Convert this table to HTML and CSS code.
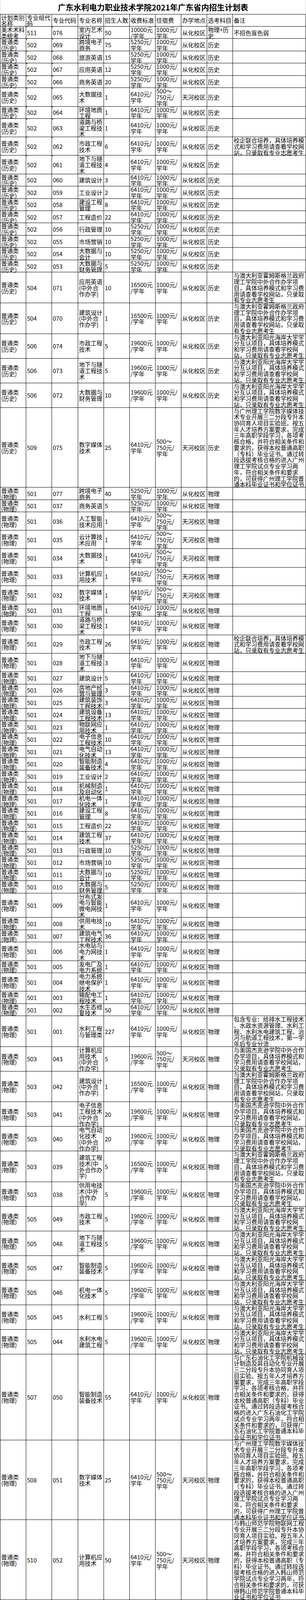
FILE: index.html
```html
<!DOCTYPE html>
<html lang="zh-CN">
<head>
<meta charset="utf-8">
<title>广东水利电力职业技术学院2021年广东省内招生计划表</title>
<link rel="stylesheet" href="styles.css">
</head>
<body>
<div class="title">广东水利电力职业技术学院2021年广东省内招生计划表</div>
<table class="plan">
<colgroup>
<col class="c66"><col class="c66"><col class="c67"><col class="c66"><col class="c66"><col class="c66"><col class="c66"><col class="c66"><col class="c66"><col class="c187">
</colgroup>
<tbody>
<tr><td><span class="l">计划类别</span><span class="l">名称</span></td><td><span class="l">专业组代</span><span class="l">码</span></td><td>专业代码</td><td>专业名称</td><td>招生人数</td><td>收费标准</td><td>住宿费</td><td>办学地点</td><td>选考科目</td><td>备注</td></tr>
<tr><td><span class="l">美术术科</span><span class="l">类统考</span></td><td class="m">511</td><td class="m">076</td><td><span class="l">室内艺术</span><span class="l">设计</span></td><td>50</td><td><span class="l">10000元</span><span class="l">/学年</span></td><td><span class="l">1000元/</span><span class="l">学年</span></td><td>从化校区</td><td><span class="l">物理+历</span><span class="l">史</span></td><td>不招色盲色弱</td></tr>
<tr><td><span class="l">普通类</span><span class="l">(历史)</span></td><td class="m">502</td><td class="m">069</td><td><span class="l">跨境电子</span><span class="l">商务</span></td><td>75</td><td><span class="l">5250元/</span><span class="l">学年</span></td><td><span class="l">1000元/</span><span class="l">学年</span></td><td>从化校区</td><td>历史</td><td></td></tr>
<tr><td><span class="l">普通类</span><span class="l">(历史)</span></td><td class="m">502</td><td class="m">068</td><td>旅游英语</td><td>15</td><td><span class="l">5250元/</span><span class="l">学年</span></td><td><span class="l">1000元/</span><span class="l">学年</span></td><td>从化校区</td><td>历史</td><td></td></tr>
<tr><td><span class="l">普通类</span><span class="l">(历史)</span></td><td class="m">502</td><td class="m">067</td><td>应用英语</td><td>12</td><td><span class="l">5250元/</span><span class="l">学年</span></td><td><span class="l">1000元/</span><span class="l">学年</span></td><td>从化校区</td><td>历史</td><td></td></tr>
<tr><td><span class="l">普通类</span><span class="l">(历史)</span></td><td class="m">502</td><td class="m">066</td><td>商务英语</td><td>20</td><td><span class="l">5250元/</span><span class="l">学年</span></td><td><span class="l">1000元/</span><span class="l">学年</span></td><td>从化校区</td><td>历史</td><td></td></tr>
<tr><td><span class="l">普通类</span><span class="l">(历史)</span></td><td class="m">502</td><td class="m">065</td><td><span class="l">大数据技</span><span class="l">术</span></td><td>1</td><td><span class="l">6410元/</span><span class="l">学年</span></td><td><span class="l">500～</span><span class="l">750元/</span><span class="l">学年</span></td><td>天河校区</td><td>历史</td><td></td></tr>
<tr><td><span class="l">普通类</span><span class="l">(历史)</span></td><td class="m">502</td><td class="m">064</td><td><span class="l">环境地质</span><span class="l">工程</span></td><td>1</td><td><span class="l">6410元/</span><span class="l">学年</span></td><td><span class="l">1000元/</span><span class="l">学年</span></td><td>从化校区</td><td>历史</td><td></td></tr>
<tr><td><span class="l">普通类</span><span class="l">(历史)</span></td><td class="m">502</td><td class="m">063</td><td><span class="l">道路与桥</span><span class="l">梁工程技</span><span class="l">术</span></td><td>1</td><td><span class="l">6410元/</span><span class="l">学年</span></td><td><span class="l">1000元/</span><span class="l">学年</span></td><td>从化校区</td><td>历史</td><td></td></tr>
<tr><td><span class="l">普通类</span><span class="l">(历史)</span></td><td class="m">502</td><td class="m">062</td><td><span class="l">市政工程</span><span class="l">技术</span></td><td>6</td><td><span class="l">6410元/</span><span class="l">学年</span></td><td><span class="l">1000元/</span><span class="l">学年</span></td><td>从化校区</td><td>历史</td><td><span class="l">校企联合培养，具体培养模</span><span class="l">式和学习费用请查看学校网</span><span class="l">站，只录取有专业志愿考生</span></td></tr>
<tr><td><span class="l">普通类</span><span class="l">(历史)</span></td><td class="m">502</td><td class="m">061</td><td><span class="l">地下与隧</span><span class="l">道工程技</span><span class="l">术</span></td><td>4</td><td><span class="l">6410元/</span><span class="l">学年</span></td><td><span class="l">1000元/</span><span class="l">学年</span></td><td>从化校区</td><td>历史</td><td></td></tr>
<tr><td><span class="l">普通类</span><span class="l">(历史)</span></td><td>502</td><td>060</td><td>建筑设计</td><td>3</td><td><span class="l">6410元/</span><span class="l">学年</span></td><td><span class="l">1000元/</span><span class="l">学年</span></td><td>从化校区</td><td>历史</td><td></td></tr>
<tr><td><span class="l">普通类</span><span class="l">(历史)</span></td><td>502</td><td>059</td><td>工业设计</td><td>2</td><td><span class="l">6410元/</span><span class="l">学年</span></td><td><span class="l">1000元/</span><span class="l">学年</span></td><td>从化校区</td><td>历史</td><td></td></tr>
<tr><td><span class="l">普通类</span><span class="l">(历史)</span></td><td>502</td><td>058</td><td><span class="l">建设工程</span><span class="l">管理</span></td><td>8</td><td><span class="l">6410元/</span><span class="l">学年</span></td><td><span class="l">1000元/</span><span class="l">学年</span></td><td>从化校区</td><td>历史</td><td></td></tr>
<tr><td><span class="l">普通类</span><span class="l">(历史)</span></td><td>502</td><td>057</td><td>工程造价</td><td>22</td><td><span class="l">6410元/</span><span class="l">学年</span></td><td><span class="l">1000元/</span><span class="l">学年</span></td><td>从化校区</td><td>历史</td><td></td></tr>
<tr><td><span class="l">普通类</span><span class="l">(历史)</span></td><td>502</td><td>056</td><td>行政管理</td><td>10</td><td><span class="l">5250元/</span><span class="l">学年</span></td><td><span class="l">1000元/</span><span class="l">学年</span></td><td>从化校区</td><td>历史</td><td></td></tr>
<tr><td><span class="l">普通类</span><span class="l">(历史)</span></td><td>502</td><td>055</td><td>市场营销</td><td>10</td><td><span class="l">5250元/</span><span class="l">学年</span></td><td><span class="l">1000元/</span><span class="l">学年</span></td><td>从化校区</td><td>历史</td><td></td></tr>
<tr><td><span class="l">普通类</span><span class="l">(历史)</span></td><td>502</td><td>054</td><td><span class="l">大数据与</span><span class="l">会计</span></td><td>10</td><td><span class="l">5250元/</span><span class="l">学年</span></td><td><span class="l">1000元/</span><span class="l">学年</span></td><td>从化校区</td><td>历史</td><td></td></tr>
<tr><td><span class="l">普通类</span><span class="l">(历史)</span></td><td>502</td><td>053</td><td><span class="l">大数据与</span><span class="l">财务管理</span></td><td>5</td><td><span class="l">5250元/</span><span class="l">学年</span></td><td><span class="l">1000元/</span><span class="l">学年</span></td><td>从化校区</td><td>历史</td><td></td></tr>
<tr><td><span class="l">普通类</span><span class="l">(历史)</span></td><td>504</td><td>071</td><td><span class="l">应用英语</span><span class="l">(中外合</span><span class="l">作办学)</span></td><td>10</td><td><span class="l">16500元</span><span class="l">/学年</span></td><td><span class="l">1000元/</span><span class="l">学年</span></td><td>从化校区</td><td>历史</td><td><span class="l">与澳大利亚霍姆斯格兰政府</span><span class="l">理工学院中外合作办学项</span><span class="l">目，具体培养模式和学习费</span><span class="l">用请查看学校网站，只录取</span><span class="l">有专业志愿考生</span></td></tr>
<tr><td><span class="l">普通类</span><span class="l">(历史)</span></td><td>504</td><td>070</td><td><span class="l">建筑设计</span><span class="l">(中外合</span><span class="l">作办学)</span></td><td>1</td><td><span class="l">16500元</span><span class="l">/学年</span></td><td><span class="l">1000元/</span><span class="l">学年</span></td><td>从化校区</td><td>历史</td><td><span class="l">与澳大利亚霍姆斯格兰政府</span><span class="l">理工学院中外合作办学项</span><span class="l">目，具体培养模式和学习费</span><span class="l">用请查看学校网站，只录取</span><span class="l">有专业志愿考生</span></td></tr>
<tr><td><span class="l">普通类</span><span class="l">(历史)</span></td><td>506</td><td>074</td><td><span class="l">市政工程</span><span class="l">技术</span></td><td>5</td><td><span class="l">19600元</span><span class="l">/学年</span></td><td><span class="l">1000元/</span><span class="l">学年</span></td><td>从化校区</td><td>历史</td><td><span class="l">与澳大利亚阳光海岸大学学</span><span class="l">分互认项目，具体培养模式</span><span class="l">和学习费用请查看学校网</span><span class="l">站，只录取有专业志愿考生</span></td></tr>
<tr><td><span class="l">普通类</span><span class="l">(历史)</span></td><td>506</td><td>073</td><td><span class="l">地下与隧</span><span class="l">道工程技</span><span class="l">术</span></td><td>5</td><td><span class="l">19600元</span><span class="l">/学年</span></td><td><span class="l">1000元/</span><span class="l">学年</span></td><td>从化校区</td><td>历史</td><td><span class="l">与澳大利亚阳光海岸大学学</span><span class="l">分互认项目，具体培养模式</span><span class="l">和学习费用请查看学校网</span><span class="l">站，只录取有专业志愿考生</span></td></tr>
<tr><td><span class="l">普通类</span><span class="l">(历史)</span></td><td>506</td><td>072</td><td><span class="l">大数据与</span><span class="l">财务管理</span></td><td>10</td><td><span class="l">19600元</span><span class="l">/学年</span></td><td><span class="l">1000元/</span><span class="l">学年</span></td><td>从化校区</td><td>历史</td><td><span class="l">与澳大利亚阳光海岸大学学</span><span class="l">分互认项目，具体培养模式</span><span class="l">和学习费用请查看学校网</span><span class="l">站，只录取有专业志愿考生</span></td></tr>
<tr><td><span class="l">普通类</span><span class="l">(历史)</span></td><td>509</td><td>075</td><td><span class="l">数字媒体</span><span class="l">技术</span></td><td>25</td><td><span class="l">6410元/</span><span class="l">学年</span></td><td><span class="l">500～</span><span class="l">750元/</span><span class="l">学年</span></td><td>天河校区</td><td>历史</td><td><span class="l">与广州理工学院数字媒体技</span><span class="l">术专业开展三二分段专升本</span><span class="l">协同育人项目实验班。按五</span><span class="l">年人才培养方案要求，完成</span><span class="l">三年高职学段学习，各项考</span><span class="l">核合格，并符合相关条件和</span><span class="l">要求的，获得本校普通高职</span><span class="l">（专科）毕业证书。通过转</span><span class="l">段选拔考核合格的进入广州</span><span class="l">理工学院试点专业学习两</span><span class="l">年，符合相关条件和要求</span><span class="l">的，可获得广州理工学院普</span><span class="l">通本科毕业证书和学位证书</span></td></tr>
<tr><td><span class="l">普通类</span><span class="l">(物理)</span></td><td>501</td><td>077</td><td><span class="l">跨境电子</span><span class="l">商务</span></td><td>40</td><td><span class="l">5250元/</span><span class="l">学年</span></td><td><span class="l">1000元/</span><span class="l">学年</span></td><td>从化校区</td><td>物理</td><td></td></tr>
<tr><td><span class="l">普通类</span><span class="l">(物理)</span></td><td>501</td><td>037</td><td>商务英语</td><td>5</td><td><span class="l">5250元/</span><span class="l">学年</span></td><td><span class="l">1000元/</span><span class="l">学年</span></td><td>从化校区</td><td>物理</td><td></td></tr>
<tr><td><span class="l">普通类</span><span class="l">(物理)</span></td><td>501</td><td>036</td><td><span class="l">人工智能</span><span class="l">技术应用</span></td><td>1</td><td><span class="l">6410元/</span><span class="l">学年</span></td><td><span class="l">500～</span><span class="l">750元/</span><span class="l">学年</span></td><td>天河校区</td><td>物理</td><td></td></tr>
<tr><td><span class="l">普通类</span><span class="l">(物理)</span></td><td>501</td><td>035</td><td><span class="l">云计算技</span><span class="l">术应用</span></td><td>1</td><td><span class="l">6410元/</span><span class="l">学年</span></td><td><span class="l">500～</span><span class="l">750元/</span><span class="l">学年</span></td><td>天河校区</td><td>物理</td><td></td></tr>
<tr><td><span class="l">普通类</span><span class="l">(物理)</span></td><td>501</td><td>034</td><td><span class="l">大数据技</span><span class="l">术</span></td><td>1</td><td><span class="l">6410元/</span><span class="l">学年</span></td><td><span class="l">500～</span><span class="l">750元/</span><span class="l">学年</span></td><td>天河校区</td><td>物理</td><td></td></tr>
<tr><td><span class="l">普通类</span><span class="l">(物理)</span></td><td>501</td><td>033</td><td><span class="l">计算机应</span><span class="l">用技术</span></td><td>1</td><td><span class="l">6410元/</span><span class="l">学年</span></td><td><span class="l">500～</span><span class="l">750元/</span><span class="l">学年</span></td><td>天河校区</td><td>物理</td><td></td></tr>
<tr><td><span class="l">普通类</span><span class="l">(物理)</span></td><td>501</td><td>032</td><td><span class="l">数字媒体</span><span class="l">技术</span></td><td>1</td><td><span class="l">6410元/</span><span class="l">学年</span></td><td><span class="l">500～</span><span class="l">750元/</span><span class="l">学年</span></td><td>天河校区</td><td>物理</td><td></td></tr>
<tr><td><span class="l">普通类</span><span class="l">(物理)</span></td><td>501</td><td>031</td><td><span class="l">环境地质</span><span class="l">工程</span></td><td>1</td><td><span class="l">6410元/</span><span class="l">学年</span></td><td><span class="l">1000元/</span><span class="l">学年</span></td><td>从化校区</td><td>物理</td><td></td></tr>
<tr><td><span class="l">普通类</span><span class="l">(物理)</span></td><td>501</td><td>030</td><td><span class="l">道路与桥</span><span class="l">梁工程技</span><span class="l">术</span></td><td>1</td><td><span class="l">6410元/</span><span class="l">学年</span></td><td><span class="l">1000元/</span><span class="l">学年</span></td><td>从化校区</td><td>物理</td><td></td></tr>
<tr><td><span class="l">普通类</span><span class="l">(物理)</span></td><td>501</td><td>029</td><td><span class="l">市政工程</span><span class="l">技术</span></td><td>26</td><td><span class="l">6410元/</span><span class="l">学年</span></td><td><span class="l">1000元/</span><span class="l">学年</span></td><td>从化校区</td><td>物理</td><td><span class="l">校企联合培养，具体培养模</span><span class="l">式和学习费用请查看学校网</span><span class="l">站，只录取有专业志愿考生</span></td></tr>
<tr><td><span class="l">普通类</span><span class="l">(物理)</span></td><td>501</td><td>028</td><td><span class="l">地下与隧</span><span class="l">道工程技</span><span class="l">术</span></td><td>3</td><td><span class="l">6410元/</span><span class="l">学年</span></td><td><span class="l">1000元/</span><span class="l">学年</span></td><td>从化校区</td><td>物理</td><td></td></tr>
<tr><td><span class="l">普通类</span><span class="l">(物理)</span></td><td>501</td><td>027</td><td>建筑设计</td><td>5</td><td><span class="l">6410元/</span><span class="l">学年</span></td><td><span class="l">1000元/</span><span class="l">学年</span></td><td>从化校区</td><td>物理</td><td></td></tr>
<tr><td><span class="l">普通类</span><span class="l">(物理)</span></td><td>501</td><td>026</td><td><span class="l">房地产经</span><span class="l">营与管理</span></td><td>3</td><td><span class="l">6410元/</span><span class="l">学年</span></td><td><span class="l">1000元/</span><span class="l">学年</span></td><td>从化校区</td><td>物理</td><td></td></tr>
<tr><td><span class="l">普通类</span><span class="l">(物理)</span></td><td>501</td><td>025</td><td><span class="l">建筑装饰</span><span class="l">工程技术</span></td><td>3</td><td><span class="l">6410元/</span><span class="l">学年</span></td><td><span class="l">1000元/</span><span class="l">学年</span></td><td>从化校区</td><td>物理</td><td></td></tr>
<tr><td><span class="l">普通类</span><span class="l">(物理)</span></td><td>501</td><td>024</td><td><span class="l">建筑设备</span><span class="l">工程技术</span></td><td>13</td><td><span class="l">6410元/</span><span class="l">学年</span></td><td><span class="l">1000元/</span><span class="l">学年</span></td><td>从化校区</td><td>物理</td><td></td></tr>
<tr><td><span class="l">普通类</span><span class="l">(物理)</span></td><td>501</td><td>023</td><td><span class="l">物联网应</span><span class="l">用技术</span></td><td>1</td><td><span class="l">6410元/</span><span class="l">学年</span></td><td><span class="l">1000元/</span><span class="l">学年</span></td><td>从化校区</td><td>物理</td><td></td></tr>
<tr><td><span class="l">普通类</span><span class="l">(物理)</span></td><td>501</td><td>022</td><td><span class="l">电子信息</span><span class="l">工程技术</span></td><td>10</td><td><span class="l">6410元/</span><span class="l">学年</span></td><td><span class="l">1000元/</span><span class="l">学年</span></td><td>从化校区</td><td>物理</td><td></td></tr>
<tr><td><span class="l">普通类</span><span class="l">(物理)</span></td><td>501</td><td>021</td><td><span class="l">电气自动</span><span class="l">化技术</span></td><td>13</td><td><span class="l">6410元/</span><span class="l">学年</span></td><td><span class="l">1000元/</span><span class="l">学年</span></td><td>从化校区</td><td>物理</td><td></td></tr>
<tr><td><span class="l">普通类</span><span class="l">(物理)</span></td><td>501</td><td>020</td><td><span class="l">智能制造</span><span class="l">装备技术</span></td><td>4</td><td><span class="l">6410元/</span><span class="l">学年</span></td><td><span class="l">1000元/</span><span class="l">学年</span></td><td>从化校区</td><td>物理</td><td></td></tr>
<tr><td><span class="l">普通类</span><span class="l">(物理)</span></td><td>501</td><td>019</td><td>工业设计</td><td>2</td><td><span class="l">6410元/</span><span class="l">学年</span></td><td><span class="l">1000元/</span><span class="l">学年</span></td><td>从化校区</td><td>物理</td><td></td></tr>
<tr><td><span class="l">普通类</span><span class="l">(物理)</span></td><td>501</td><td>018</td><td><span class="l">机械制造</span><span class="l">及自动化</span></td><td>1</td><td><span class="l">6410元/</span><span class="l">学年</span></td><td><span class="l">1000元/</span><span class="l">学年</span></td><td>从化校区</td><td>物理</td><td></td></tr>
<tr><td><span class="l">普通类</span><span class="l">(物理)</span></td><td>501</td><td>017</td><td><span class="l">机电一体</span><span class="l">化技术</span></td><td>1</td><td><span class="l">6410元/</span><span class="l">学年</span></td><td><span class="l">1000元/</span><span class="l">学年</span></td><td>从化校区</td><td>物理</td><td></td></tr>
<tr><td><span class="l">普通类</span><span class="l">(物理)</span></td><td>501</td><td>016</td><td><span class="l">建设工程</span><span class="l">管理</span></td><td>8</td><td><span class="l">6410元/</span><span class="l">学年</span></td><td><span class="l">1000元/</span><span class="l">学年</span></td><td>从化校区</td><td>物理</td><td></td></tr>
<tr><td><span class="l">普通类</span><span class="l">(物理)</span></td><td>501</td><td>015</td><td>工程造价</td><td>22</td><td><span class="l">6410元/</span><span class="l">学年</span></td><td><span class="l">1000元/</span><span class="l">学年</span></td><td>从化校区</td><td>物理</td><td></td></tr>
<tr><td><span class="l">普通类</span><span class="l">(物理)</span></td><td>501</td><td>014</td><td><span class="l">建筑工程</span><span class="l">技术</span></td><td>37</td><td><span class="l">6410元/</span><span class="l">学年</span></td><td><span class="l">1000元/</span><span class="l">学年</span></td><td>从化校区</td><td>物理</td><td></td></tr>
<tr><td><span class="l">普通类</span><span class="l">(物理)</span></td><td>501</td><td>013</td><td>行政管理</td><td>10</td><td><span class="l">5250元/</span><span class="l">学年</span></td><td><span class="l">1000元/</span><span class="l">学年</span></td><td>从化校区</td><td>物理</td><td></td></tr>
<tr><td><span class="l">普通类</span><span class="l">(物理)</span></td><td>501</td><td>012</td><td>市场营销</td><td>10</td><td><span class="l">5250元/</span><span class="l">学年</span></td><td><span class="l">1000元/</span><span class="l">学年</span></td><td>从化校区</td><td>物理</td><td></td></tr>
<tr><td><span class="l">普通类</span><span class="l">(物理)</span></td><td>501</td><td>011</td><td><span class="l">大数据与</span><span class="l">会计</span></td><td>10</td><td><span class="l">5250元/</span><span class="l">学年</span></td><td><span class="l">1000元/</span><span class="l">学年</span></td><td>从化校区</td><td>物理</td><td></td></tr>
<tr><td><span class="l">普通类</span><span class="l">(物理)</span></td><td>501</td><td>010</td><td><span class="l">大数据与</span><span class="l">财务管理</span></td><td>5</td><td><span class="l">5250元/</span><span class="l">学年</span></td><td><span class="l">1000元/</span><span class="l">学年</span></td><td>从化校区</td><td>物理</td><td></td></tr>
<tr><td><span class="l">普通类</span><span class="l">(物理)</span></td><td>501</td><td>009</td><td><span class="l">分布式发</span><span class="l">电与智能</span><span class="l">微电网技</span><span class="l">术</span></td><td>1</td><td><span class="l">6410元/</span><span class="l">学年</span></td><td><span class="l">1000元/</span><span class="l">学年</span></td><td>从化校区</td><td>物理</td><td></td></tr>
<tr><td><span class="l">普通类</span><span class="l">(物理)</span></td><td>501</td><td>008</td><td><span class="l">供用电技</span><span class="l">术</span></td><td>10</td><td><span class="l">6410元/</span><span class="l">学年</span></td><td><span class="l">1000元/</span><span class="l">学年</span></td><td>从化校区</td><td>物理</td><td></td></tr>
<tr><td><span class="l">普通类</span><span class="l">(物理)</span></td><td>501</td><td>007</td><td><span class="l">建筑电气</span><span class="l">工程技术</span></td><td>36</td><td><span class="l">6410元/</span><span class="l">学年</span></td><td><span class="l">1000元/</span><span class="l">学年</span></td><td>从化校区</td><td>物理</td><td></td></tr>
<tr><td><span class="l">普通类</span><span class="l">(物理)</span></td><td>501</td><td>006</td><td><span class="l">水电站与</span><span class="l">电力网技</span><span class="l">术</span></td><td>1</td><td><span class="l">6410元/</span><span class="l">学年</span></td><td><span class="l">1000元/</span><span class="l">学年</span></td><td>从化校区</td><td>物理</td><td></td></tr>
<tr><td><span class="l">普通类</span><span class="l">(物理)</span></td><td>501</td><td>005</td><td><span class="l">发电厂及</span><span class="l">电力系统</span></td><td>1</td><td><span class="l">6410元/</span><span class="l">学年</span></td><td><span class="l">1000元/</span><span class="l">学年</span></td><td>从化校区</td><td>物理</td><td></td></tr>
<tr><td><span class="l">普通类</span><span class="l">(物理)</span></td><td>501</td><td>004</td><td><span class="l">电力系统</span><span class="l">继电保护</span><span class="l">技术</span></td><td>1</td><td><span class="l">6410元/</span><span class="l">学年</span></td><td><span class="l">1000元/</span><span class="l">学年</span></td><td>从化校区</td><td>物理</td><td></td></tr>
<tr><td><span class="l">普通类</span><span class="l">(物理)</span></td><td>501</td><td>003</td><td><span class="l">输配电工</span><span class="l">程技术</span></td><td>1</td><td><span class="l">6410元/</span><span class="l">学年</span></td><td><span class="l">1000元/</span><span class="l">学年</span></td><td>从化校区</td><td>物理</td><td></td></tr>
<tr><td><span class="l">普通类</span><span class="l">(物理)</span></td><td>501</td><td>002</td><td><span class="l">水生态修</span><span class="l">复技术</span></td><td>50</td><td><span class="l">6410元/</span><span class="l">学年</span></td><td><span class="l">1000元/</span><span class="l">学年</span></td><td>从化校区</td><td>物理</td><td></td></tr>
<tr><td><span class="l">普通类</span><span class="l">(物理)</span></td><td>501</td><td>001</td><td><span class="l">水利工程</span><span class="l">与管理类</span></td><td>227</td><td><span class="l">6410元/</span><span class="l">学年</span></td><td><span class="l">1000元/</span><span class="l">学年</span></td><td>从化校区</td><td>物理</td><td><span class="l">包含专业：给排水工程技术</span><span class="l">、水政水资源管理、水利工</span><span class="l">程、水利水电建筑工程、治</span><span class="l">河与航道工程技术，第一学</span><span class="l">年后专业分流</span></td></tr>
<tr><td><span class="l">普通类</span><span class="l">(物理)</span></td><td>503</td><td>043</td><td><span class="l">计算机应</span><span class="l">用技术</span><span class="l">(中外合</span><span class="l">作办学)</span></td><td>5</td><td><span class="l">19600元</span><span class="l">/学年</span></td><td><span class="l">500～</span><span class="l">750元/</span><span class="l">学年</span></td><td>天河校区</td><td>物理</td><td><span class="l">与美国杰克逊学院中外合作</span><span class="l">办学项目，具体培养模式和</span><span class="l">学习费用请查看学校网站，</span><span class="l">只录取有专业志愿考生</span></td></tr>
<tr><td><span class="l">普通类</span><span class="l">(物理)</span></td><td>503</td><td>042</td><td><span class="l">建筑设计</span><span class="l">(中外合</span><span class="l">作办学)</span></td><td>1</td><td><span class="l">16500元</span><span class="l">/学年</span></td><td><span class="l">1000元/</span><span class="l">学年</span></td><td>从化校区</td><td>物理</td><td><span class="l">与澳大利亚霍姆斯格兰政府</span><span class="l">理工学院中外合作办学项</span><span class="l">目，具体培养模式和学习费</span><span class="l">用请查看学校网站，只录取</span><span class="l">有专业志愿考生</span></td></tr>
<tr><td><span class="l">普通类</span><span class="l">(物理)</span></td><td>503</td><td>041</td><td><span class="l">电子信息</span><span class="l">工程技术</span><span class="l">(中外合</span><span class="l">作办学)</span></td><td>20</td><td><span class="l">19600元</span><span class="l">/学年</span></td><td><span class="l">1000元/</span><span class="l">学年</span></td><td>从化校区</td><td>物理</td><td><span class="l">与美国杰克逊学院中外合作</span><span class="l">办学项目，具体培养模式和</span><span class="l">学习费用请查看学校网站，</span><span class="l">只录取有专业志愿考生</span></td></tr>
<tr><td><span class="l">普通类</span><span class="l">(物理)</span></td><td>503</td><td>040</td><td><span class="l">电气自动</span><span class="l">化技术</span><span class="l">(中外合</span><span class="l">作办学)</span></td><td>20</td><td><span class="l">19600元</span><span class="l">/学年</span></td><td><span class="l">1000元/</span><span class="l">学年</span></td><td>从化校区</td><td>物理</td><td><span class="l">与美国杰克逊学院中外合作</span><span class="l">办学项目，具体培养模式和</span><span class="l">学习费用请查看学校网站，</span><span class="l">只录取有专业志愿考生</span></td></tr>
<tr><td><span class="l">普通类</span><span class="l">(物理)</span></td><td>503</td><td>039</td><td><span class="l">建筑工程</span><span class="l">技术(中</span><span class="l">外合作办</span><span class="l">学)</span></td><td>5</td><td><span class="l">16500元</span><span class="l">/学年</span></td><td><span class="l">1000元/</span><span class="l">学年</span></td><td>从化校区</td><td>物理</td><td><span class="l">与澳大利亚霍姆斯格兰政府</span><span class="l">理工学院中外合作办学项</span><span class="l">目，具体培养模式和学习费</span><span class="l">用请查看学校网站，只录取</span><span class="l">有专业志愿考生</span></td></tr>
<tr><td><span class="l">普通类</span><span class="l">(物理)</span></td><td>503</td><td>038</td><td><span class="l">供用电技</span><span class="l">术(中外</span><span class="l">合作办</span><span class="l">学)</span></td><td>5</td><td><span class="l">19600元</span><span class="l">/学年</span></td><td><span class="l">1000元/</span><span class="l">学年</span></td><td>从化校区</td><td>物理</td><td><span class="l">与美国杰克逊学院中外合作</span><span class="l">办学项目，具体培养模式和</span><span class="l">学习费用请查看学校网站，</span><span class="l">只录取有专业志愿考生</span></td></tr>
<tr><td><span class="l">普通类</span><span class="l">(物理)</span></td><td>505</td><td>049</td><td><span class="l">市政工程</span><span class="l">技术</span></td><td>5</td><td><span class="l">19600元</span><span class="l">/学年</span></td><td><span class="l">1000元/</span><span class="l">学年</span></td><td>从化校区</td><td>物理</td><td><span class="l">与澳大利亚阳光海岸大学学</span><span class="l">分互认项目，具体培养模式</span><span class="l">和学习费用请查看学校网</span><span class="l">站，只录取有专业志愿考生</span></td></tr>
<tr><td><span class="l">普通类</span><span class="l">(物理)</span></td><td>505</td><td>048</td><td><span class="l">地下与隧</span><span class="l">道工程技</span><span class="l">术</span></td><td>5</td><td><span class="l">19600元</span><span class="l">/学年</span></td><td><span class="l">1000元/</span><span class="l">学年</span></td><td>从化校区</td><td>物理</td><td><span class="l">与澳大利亚阳光海岸大学学</span><span class="l">分互认项目，具体培养模式</span><span class="l">和学习费用请查看学校网</span><span class="l">站，只录取有专业志愿考生</span></td></tr>
<tr><td><span class="l">普通类</span><span class="l">(物理)</span></td><td>505</td><td>047</td><td><span class="l">智能制造</span><span class="l">装备技术</span></td><td>5</td><td><span class="l">19600元</span><span class="l">/学年</span></td><td><span class="l">1000元/</span><span class="l">学年</span></td><td>从化校区</td><td>物理</td><td><span class="l">与澳大利亚阳光海岸大学学</span><span class="l">分互认项目，具体培养模式</span><span class="l">和学习费用请查看学校网</span><span class="l">站，只录取有专业志愿考生</span></td></tr>
<tr><td><span class="l">普通类</span><span class="l">(物理)</span></td><td>505</td><td>046</td><td><span class="l">机电一体</span><span class="l">化技术</span></td><td>5</td><td><span class="l">19600元</span><span class="l">/学年</span></td><td><span class="l">1000元/</span><span class="l">学年</span></td><td>从化校区</td><td>物理</td><td><span class="l">与澳大利亚阳光海岸大学学</span><span class="l">分互认项目，具体培养模式</span><span class="l">和学习费用请查看学校网</span><span class="l">站，只录取有专业志愿考生</span></td></tr>
<tr><td><span class="l">普通类</span><span class="l">(物理)</span></td><td>505</td><td>045</td><td>水利工程</td><td>5</td><td><span class="l">19600元</span><span class="l">/学年</span></td><td><span class="l">1000元/</span><span class="l">学年</span></td><td>从化校区</td><td>物理</td><td><span class="l">与澳大利亚阳光海岸大学学</span><span class="l">分互认项目，具体培养模式</span><span class="l">和学习费用请查看学校网</span><span class="l">站，只录取有专业志愿考生</span></td></tr>
<tr><td><span class="l">普通类</span><span class="l">(物理)</span></td><td>505</td><td>044</td><td><span class="l">水利水电</span><span class="l">建筑工程</span></td><td>5</td><td><span class="l">19600元</span><span class="l">/学年</span></td><td><span class="l">1000元/</span><span class="l">学年</span></td><td>从化校区</td><td>物理</td><td><span class="l">与澳大利亚阳光海岸大学学</span><span class="l">分互认项目，具体培养模式</span><span class="l">和学习费用请查看学校网</span><span class="l">站，只录取有专业志愿考生</span></td></tr>
<tr><td><span class="l">普通类</span><span class="l">(物理)</span></td><td>507</td><td>050</td><td><span class="l">智能制造</span><span class="l">装备技术</span></td><td>55</td><td><span class="l">6410元/</span><span class="l">学年</span></td><td><span class="l">1000元/</span><span class="l">学年</span></td><td>从化校区</td><td>物理</td><td><span class="l">与广东石油化工学院机械设</span><span class="l">计制造及其自动化专业开展</span><span class="l">三二分段专升本协同育人项</span><span class="l">目实验。按五年人才培养方</span><span class="l">案要求，完成三年高职学段</span><span class="l">学习，各项考核合格，并符</span><span class="l">合相关条件和要求的，获得</span><span class="l">本校普通高职（专科）毕业</span><span class="l">证书。通过转段选拔考核合</span><span class="l">格的进入广东石油化工学院</span><span class="l">试点专业学习两年，符合相</span><span class="l">关条件和要求的，可获得广</span><span class="l">东石油化工学院普通本科毕</span><span class="l">业证书和学位证书</span></td></tr>
<tr><td><span class="l">普通类</span><span class="l">(物理)</span></td><td>508</td><td>051</td><td><span class="l">数字媒体</span><span class="l">技术</span></td><td>25</td><td><span class="l">6410元/</span><span class="l">学年</span></td><td><span class="l">500～</span><span class="l">750元/</span><span class="l">学年</span></td><td>天河校区</td><td>物理</td><td><span class="l">与广州理工学院数字媒体技</span><span class="l">术专业开展三二分段专升本</span><span class="l">协同育人项目实验班。按五</span><span class="l">年人才培养方案要求，完成</span><span class="l">三年高职学段学习，各项考</span><span class="l">核合格，并符合相关条件和</span><span class="l">要求的，获得本校普通高职</span><span class="l">（专科）毕业证书。通过转</span><span class="l">段选拔考核合格的进入广州</span><span class="l">理工学院试点专业学习两</span><span class="l">年，符合相关条件和要求</span><span class="l">的，可获得广州理工学院普</span><span class="l">通本科毕业证书和学位证书</span></td></tr>
<tr><td><span class="l">普通类</span><span class="l">(物理)</span></td><td>510</td><td>052</td><td><span class="l">计算机应</span><span class="l">用技术</span></td><td>50</td><td><span class="l">6410元/</span><span class="l">学年</span></td><td><span class="l">500～</span><span class="l">750元/</span><span class="l">学年</span></td><td>天河校区</td><td>物理</td><td><span class="l">与韩山师范学院物联网工程</span><span class="l">专业开展三二分段专升本协</span><span class="l">同育人项目实验。按五年人</span><span class="l">才培养方案要求，完成三年</span><span class="l">高职学段学习，各项考核合</span><span class="l">格，并符合相关条件和要求</span><span class="l">的，获得本校普通高职（专</span><span class="l">科）毕业证书。通过转段选</span><span class="l">拔考核合格的进入韩山师范</span><span class="l">学院试点专业学习两年，符</span><span class="l">合相关条件和要求的，可获</span><span class="l">得韩山师范学院普通本科毕</span><span class="l">业证书和学位证书</span></td></tr>
</tbody>
</table>
</body>
</html>
```
FILE: styles.css
```css
:root {
  --line: 15.734375px;
}
html, body {
  margin: 0;
  padding: 0;
  background: #ffffff;
}
body {
  width: 783px;
  font-family: "Noto Sans CJK SC", "Noto Sans", sans-serif;
  color: #000000;
}
.title {
  height: 35.5px;
  box-sizing: border-box;
  display: flex;
  align-items: center;
  justify-content: center;
  padding-top: 3px;
  font-size: 20px;
  line-height: 22px;
  font-weight: bold;
  border-left: 1px solid #d0d0d0;
  border-right: 1px solid #d0d0d0;
}
.plan {
  width: 783px;
  table-layout: fixed;
  border-collapse: separate;
  border-spacing: 0;
  border-left: 1px solid #000;
  border-top: 1px solid #000;
}
.c66 { width: 66px; }
.c67 { width: 67px; }
.c187 { width: 187px; }
.plan td {
  position: relative;
  padding: 0 0 0 2px;
  font-size: 15px;
  line-height: var(--line);
  vertical-align: middle;
  text-align: left;
  white-space: nowrap;
  box-shadow: inset -1px -1px 0 #000;
}
.plan td .l {
  display: block;
  height: var(--line);
  line-height: var(--line);
}
.plan td.m::before {
  content: "";
  position: absolute;
  left: 0;
  top: 0;
  width: 0;
  height: 0;
  border-top: 3px solid #1a9c1a;
  border-right: 4px solid transparent;
}
```
